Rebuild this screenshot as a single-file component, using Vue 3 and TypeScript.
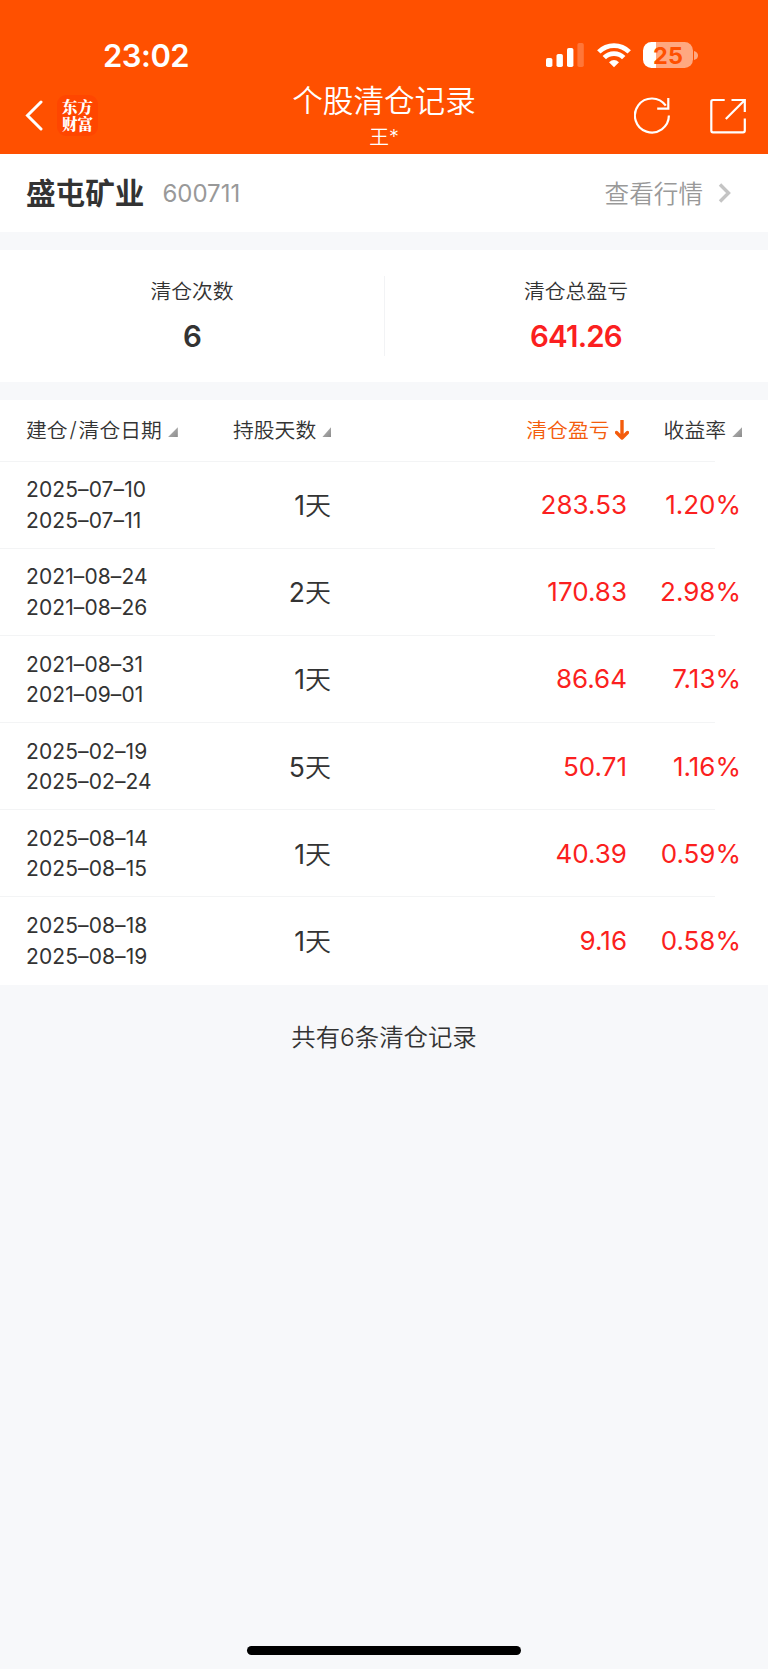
<script setup lang="ts">
interface ClearanceRecord {
  opened: string
  closed: string
  days: number
  profit: string
  rate: string
}

const records: ClearanceRecord[] = [
  { opened: '2025–07–10', closed: '2025–07–11', days: 1, profit: '283.53', rate: '1.20%' },
  { opened: '2021–08–24', closed: '2021–08–26', days: 2, profit: '170.83', rate: '2.98%' },
  { opened: '2021–08–31', closed: '2021–09–01', days: 1, profit: '86.64', rate: '7.13%' },
  { opened: '2025–02–19', closed: '2025–02–24', days: 5, profit: '50.71', rate: '1.16%' },
  { opened: '2025–08–14', closed: '2025–08–15', days: 1, profit: '40.39', rate: '0.59%' },
  { opened: '2025–08–18', closed: '2025–08–19', days: 1, profit: '9.16', rate: '0.58%' },
]
</script>

<template>
  <div class="screen">
    <header class="top">
      <div class="status">
        <span class="clock">23:02</span>
        <div class="indicators">
          <svg class="signal" width="38" height="25" viewBox="0 0 38 25" fill="#fff">
            <rect x="0" y="15" width="6.4" height="9" rx="1.8" />
            <rect x="10.5" y="11" width="6.4" height="13" rx="1.8" />
            <rect x="21" y="5" width="6.4" height="19" rx="1.8" />
            <rect x="31.4" y="0" width="6.4" height="24" rx="1.8" opacity=".22" />
          </svg>
          <svg class="wifi" width="34" height="25" viewBox="0 0 34 25">
            <g fill="none" stroke="#fff" stroke-width="4.8">
              <path d="M1.8 8.9A21.5 21.5 0 0 1 32.2 8.9" />
              <path d="M7.3 14.6A13.7 13.7 0 0 1 26.7 14.6" />
            </g>
            <path d="M12 19.3Q17 14.9 22 19.3L17 24.2Z" fill="#fff" />
          </svg>
          <div class="battery"><span>25</span></div>
          <svg class="cap" width="4" height="9" viewBox="0 0 4 9"><path d="M0 0Q4 1 4 4.5T0 9Z" fill="#fff" opacity=".5" /></svg>
        </div>
      </div>
      <nav class="nav">
        <div class="side">
          <svg class="back" width="18" height="31" viewBox="0 0 18 31">
            <path d="M16 2L2.5 15.5L16 29" fill="none" stroke="#fff" stroke-width="3" stroke-linecap="round" />
          </svg>
          <div class="brand">东方<br />财富</div>
        </div>
        <div class="heading">
          <h1>个股清仓记录</h1>
          <p>王*</p>
        </div>
        <div class="side actions">
          <svg width="36" height="37" viewBox="0 0 36 37" fill="none" stroke="#fff" stroke-width="2.2">
            <path d="M34.9 18.6A17 17 0 1 1 31.8 8.7M34.3 1V11.6H23.2" />
          </svg>
          <svg width="36" height="36" viewBox="0 0 36 36" fill="none" stroke="#fff" stroke-width="2.2">
            <path d="M14.7 2H3Q1.3 2 1.3 3.7V32.6Q1.3 34.4 3 34.4H33Q34.8 34.4 34.8 32.6V20.5M21.5 2H34.8V14M34.8 2L15.8 21" />
          </svg>
        </div>
      </nav>
    </header>

    <section class="stock">
      <h2>盛屯矿业</h2>
      <span class="code">600711</span>
      <a class="quote">查看行情</a>
      <svg width="14" height="22" viewBox="0 0 14 22">
        <path d="M2 2.5L10.5 11L2 19.5" fill="none" stroke="#c4c4c4" stroke-width="3.4" />
      </svg>
    </section>

    <section class="summary">
      <div class="figure">
        <span class="label">清仓次数</span>
        <strong>6</strong>
      </div>
      <div class="figure">
        <span class="label">清仓总盈亏</span>
        <strong class="gain">641.26</strong>
      </div>
    </section>

    <section class="table">
      <div class="row columns">
        <div class="date">建仓<span class="slash">/</span>清仓日期<i class="sort"></i></div>
        <div class="held">持股天数<i class="sort"></i></div>
        <div class="profit active">清仓盈亏<svg width="14" height="21" viewBox="0 0 14 21">
          <path d="M7 .5V18M1.5 12.5L7 18L12.5 12.5" fill="none" stroke="#f45c0c" stroke-width="3.4" stroke-linejoin="round" stroke-linecap="round" />
        </svg></div>
        <div class="rate">收益率<i class="sort"></i></div>
      </div>
      <div v-for="record in records" :key="record.opened" class="row entry">
        <div class="date"><span>{{ record.opened }}</span><span>{{ record.closed }}</span></div>
        <div class="held"><b>{{ record.days }}</b>天</div>
        <div class="profit">{{ record.profit }}</div>
        <div class="rate">{{ record.rate }}</div>
      </div>
    </section>

    <p class="total">共有6条清仓记录</p>
    <div class="home"></div>
  </div>
</template>

<style>
html,
body {
  margin: 0;
  background: #f7f8fa;
}
</style>

<style scoped>
.screen {
  box-sizing: border-box;
  display: flex;
  flex-direction: column;
  width: 768px;
  height: 1669px;
  overflow: hidden;
  background: #f7f8fa;
  color: #333;
  font-family: Inter, 'Noto Sans CJK SC', sans-serif;
  font-weight: 350;
}
h1, h2, p { margin: 0; }
svg { display: block; flex: none; }
.top {
  flex: none;
  height: 153.5px;
  background: #ff5000;
  color: #fff;
}
.status {
  display: flex;
  justify-content: space-between;
  height: 80px;
  padding: 0 70px 0 103px;
}
.clock {
  margin-top: 36px;
  font-size: 31px;
  line-height: 40px;
  font-weight: 600;
  letter-spacing: -0.5px;
}
.indicators {
  display: flex;
  align-items: flex-start;
  padding-top: 42px;
}
.signal { margin-top: 1px; }
.wifi { margin: 1px 12px 0 13px; }
.battery {
  width: 50px;
  height: 26px;
  border-radius: 8.5px;
  background: linear-gradient(90deg, #fff 12.5px, #ffa880 12.5px);
  color: #ff5000;
  font-size: 23.5px;
  line-height: 27px;
  font-weight: 650;
  text-align: center;
}
.cap { margin: 9px 0 0 1px; }
.nav {
  display: grid;
  grid-template-columns: 1fr 200px 1fr;
  height: 73px;
}
.side {
  display: flex;
  align-items: center;
  height: 71px;
  padding-left: 25px;
}
.brand {
  box-sizing: border-box;
  width: 41px;
  height: 41px;
  margin-left: 14px;
  padding-top: 3px;
  border-radius: 9px;
  background: #ff4600;
  font-family: 'Noto Serif CJK SC', 'Noto Sans CJK SC', sans-serif;
  font-size: 15.5px;
  line-height: 17px;
  font-weight: 900;
  text-align: center;
}
.heading { text-align: center; }
.heading h1 {
  margin-top: 1px;
  font-size: 30.6px;
  line-height: 40px;
  font-weight: 350;
  white-space: nowrap;
}
.heading p {
  font-size: 19.8px;
  line-height: 32px;
}
.actions {
  justify-content: flex-end;
  gap: 40px;
  padding: 0 22px 0 0;
}
.stock {
  display: flex;
  flex: none;
  align-items: center;
  box-sizing: border-box;
  height: 78.5px;
  padding: 0 36px 0 26px;
  background: #fff;
}
.stock h2 {
  padding-top: 1px;
  font-size: 29.6px;
  line-height: 40px;
  font-weight: 700;
}
.code {
  margin-left: 18px;
  padding-top: 1px;
  color: #999;
  font-size: 24px;
  font-weight: 375;
}
.quote {
  margin: -2px 15px 0 auto;
  color: #999;
  font-size: 24.6px;
}
.summary {
  display: grid;
  grid-template-columns: 1fr 1fr;
  flex: none;
  box-sizing: border-box;
  height: 132px;
  margin: 18px 0;
  padding: 26px 0;
  background: #fff;
}
.figure {
  display: flex;
  flex-direction: column;
  align-items: center;
}
.figure + .figure { background: linear-gradient(#f2f3f5, #f2f3f5) left / 1px 100% no-repeat; }
.label {
  margin-top: 1px;
  font-size: 20.8px;
  line-height: 30px;
}
.figure strong {
  margin-top: 12px;
  font-size: 29.5px;
  line-height: 34px;
  font-weight: 600;
  letter-spacing: -0.8px;
}
.figure .gain { color: #fb1f20; }
.table {
  flex: none;
  background: #fff;
}
.row {
  display: grid;
  grid-template-columns: 207px 98px 296px 1fr;
  align-items: center;
  box-sizing: border-box;
  height: 87.2px;
  padding-left: 26px;
  background: linear-gradient(#f3f4f5, #f3f4f5) left bottom / 715px 1px no-repeat;
}
.row:last-child { background: none; }
.columns {
  height: 61.5px;
  padding-bottom: 3px;
  font-size: 20.8px;
  white-space: nowrap;
}
.columns > div {
  display: flex;
  align-items: center;
}
.slash {
  width: 11px;
  text-align: center;
}
.sort {
  width: 10px;
  height: 10px;
  margin: 6px 0 0 6px;
  background: linear-gradient(135deg, #bbb, #8c8c8c);
  clip-path: polygon(100% 0, 100% 100%, 0 100%);
}
.columns .profit {
  justify-content: flex-end;
  margin-right: -1.5px;
  color: #f45c0c;
}
.columns .profit svg { margin: 2px 0 0 5px; }
.columns .rate {
  justify-content: flex-end;
  padding-right: 26px;
}
.entry {
  font-size: 26px;
  font-weight: 375;
}
.entry .date {
  display: flex;
  flex-direction: column;
  padding-top: 1px;
  font-size: 21px;
  line-height: 30.4px;
  letter-spacing: 0.1px;
}
.entry .held {
  padding-bottom: 3px;
  font-size: 26px;
  font-weight: 350;
  text-align: right;
}
.held b {
  font-size: 26.5px;
  font-weight: 375;
}
.entry .profit,
.entry .rate {
  padding-bottom: 1px;
  color: #fb1f20;
  text-align: right;
}
.entry .rate { padding-right: 27px; }
.total {
  margin-top: 34px;
  font-size: 24.4px;
  line-height: 36px;
  text-align: center;
}
.home {
  flex: none;
  width: 274px;
  height: 9px;
  margin: auto auto 14.5px 247px;
  border-radius: 5px;
  background: #000;
}
</style>
